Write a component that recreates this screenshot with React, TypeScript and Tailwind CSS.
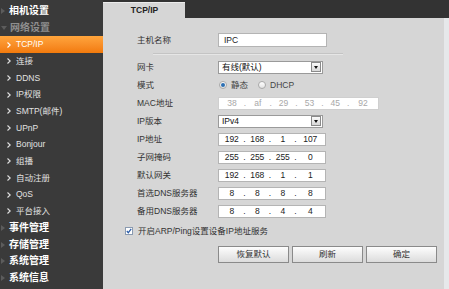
const FONT = { fontFamily: '"Liberation Sans", "Noto Sans CJK SC", sans-serif' };

type NavItem = { label: string; kind: 'top' | 'open' | 'sub'; active?: boolean };

const nav: NavItem[] = [
  { label: '相机设置', kind: 'top' },
  { label: '网络设置', kind: 'open' },
  { label: 'TCP/IP', kind: 'sub', active: true },
  { label: '连接', kind: 'sub' },
  { label: 'DDNS', kind: 'sub' },
  { label: 'IP权限', kind: 'sub' },
  { label: 'SMTP(邮件)', kind: 'sub' },
  { label: 'UPnP', kind: 'sub' },
  { label: 'Bonjour', kind: 'sub' },
  { label: '组播', kind: 'sub' },
  { label: '自动注册', kind: 'sub' },
  { label: 'QoS', kind: 'sub' },
  { label: '平台接入', kind: 'sub' },
  { label: '事件管理', kind: 'top' },
  { label: '存储管理', kind: 'top' },
  { label: '系统管理', kind: 'top' },
  { label: '系统信息', kind: 'top' },
];

function Sidebar() {
  return (
    <div className="w-[103px] shrink-0 bg-[#3a3a3a] pt-[3px]">
      {nav.map((item) => (
        <div
          key={item.label}
          className={`flex h-[16.66px] items-center ${
            item.active ? 'bg-gradient-to-b from-[#ffa53c] to-[#f27a0a]' : ''
          }`}
        >
          {item.kind === 'top' && (
            <>
              <span className="ml-[1px] h-0 w-0 border-y-[3px] border-l-[4px] border-y-transparent border-l-[#5c5c5c]" />
              <span className="ml-[4px] text-[10px] font-bold leading-none text-white">{item.label}</span>
            </>
          )}
          {item.kind === 'open' && (
            <>
              <span className="ml-[1px] mt-[1px] h-0 w-0 border-x-[3px] border-t-[4px] border-x-transparent border-t-[#5c5c5c]" />
              <span className="ml-[3px] text-[10px] font-bold leading-none text-[#8e8e8e]">{item.label}</span>
            </>
          )}
          {item.kind === 'sub' && (
            <>
              <svg width="4" height="6" viewBox="0 0 4 6" className="ml-[7px]">
                <path d="M0.5 0.5 L3.2 3 L0.5 5.5" fill="none" stroke={item.active ? '#fff' : '#e0e0e0'} strokeWidth="1.1" />
              </svg>
              <span className={`ml-[5px] text-[8.5px] leading-none ${item.active ? 'text-white' : 'text-[#e2e2e2]'}`}>
                {item.label}
              </span>
            </>
          )}
        </div>
      ))}
    </div>
  );
}

function Label({ children }: { children: React.ReactNode }) {
  return <div className="w-[81px] shrink-0 text-[8.5px] leading-none text-[#333]">{children}</div>;
}

function Row({ label, children }: { label: string; children: React.ReactNode }) {
  return (
    <div className="flex h-[18px] items-center">
      <Label>{label}</Label>
      {children}
    </div>
  );
}

function TextBox({ value, width }: { value: string; width: string }) {
  return (
    <div className={`flex h-[14px] items-center border border-[#b4b4b4] bg-white pl-[5px] text-[8.5px] leading-none text-[#222] ${width}`}>
      {value}
    </div>
  );
}

function Select({ value }: { value: string }) {
  return (
    <div className="flex h-[13px] w-[105px] items-center border border-[#9a9a9a] bg-white">
      <span className="flex-1 pl-[3px] text-[8.5px] leading-none text-[#111]">{value}</span>
      <span className="mr-[1px] flex h-[10px] w-[10px] items-center justify-center border border-[#8a8a8a] bg-gradient-to-b from-[#fafafa] to-[#d8d8d8]">
        <span className="h-0 w-0 border-x-[2.5px] border-t-[3px] border-x-transparent border-t-[#111]" />
      </span>
    </div>
  );
}

function Segments({ parts, width, muted }: { parts: string[]; width: string; muted?: boolean }) {
  return (
    <div
      className={`flex h-[13px] items-center border bg-white px-[2px] text-[8.5px] leading-none ${width} ${
        muted ? 'border-[#cfcfcf] text-[#a8a8a8]' : 'border-[#b4b4b4] text-[#222]'
      }`}
    >
      {parts.map((p, i) => (
        <div key={i} className="flex flex-1 items-center">
          <span className="flex-1 text-center">{p}</span>
          {i < parts.length - 1 && <span className="w-[4px] text-center">.</span>}
        </div>
      ))}
    </div>
  );
}

function Radio({ checked, label }: { checked?: boolean; label: string }) {
  return (
    <div className="flex items-center">
      <span className="flex h-[8px] w-[8px] items-center justify-center rounded-full border border-[#a9a9a9] bg-gradient-to-b from-white to-[#e4e4e4]">
        {checked && <span className="h-[4px] w-[4px] rounded-full bg-[#2c6fb3]" />}
      </span>
      <span className="ml-[4px] text-[8.5px] leading-none text-[#444]">{label}</span>
    </div>
  );
}

function Button({ label }: { label: string }) {
  return (
    <button className="flex h-[17px] w-[71px] items-center justify-center border border-[#8a8a8a] bg-gradient-to-b from-[#fdfdfd] to-[#dcdcdc] text-[8.5px] leading-none text-[#333]">
      {label}
    </button>
  );
}

export default function App() {
  return (
    <div className="flex h-[289px] w-[449px] overflow-hidden bg-[#3a3a3a]" style={FONT}>
      <Sidebar />
      <div className="flex flex-1 flex-col">
        <div className="flex h-[18px] items-end bg-[#333333]">
          <div className="flex h-[16px] w-[82px] items-center justify-center border-t border-[#ececec] bg-[#d6d6d6] pl-[1px] text-[8.5px] font-bold leading-none text-[#222]">
            TCP/IP
          </div>
        </div>
        <div className="flex flex-1">
          <div className="flex-1 bg-[#d6d6d6] pl-[34px] pt-[13px]">
            <Row label="主机名称">
              <TextBox value="IPC" width="w-[109px]" />
            </Row>
            <div className="ml-[16px] mt-[4px] h-px w-[190px] bg-[#c4c4c4] shadow-[0_1px_0_#e6e6e6]" />
            <div className="mt-[4px]">
              <Row label="网卡">
                <Select value="有线(默认)" />
              </Row>
              <Row label="模式">
                <div className="flex items-center gap-[10px] pl-[1px]">
                  <Radio checked label="静态" />
                  <Radio label="DHCP" />
                </div>
              </Row>
              <Row label="MAC地址">
                <Segments parts={['38', 'af', '29', '53', '45', '92']} width="w-[161px]" muted />
              </Row>
              <Row label="IP版本">
                <Select value="IPv4" />
              </Row>
              <Row label="IP地址">
                <Segments parts={['192', '168', '1', '107']} width="w-[108px]" />
              </Row>
              <Row label="子网掩码">
                <Segments parts={['255', '255', '255', '0']} width="w-[108px]" />
              </Row>
              <Row label="默认网关">
                <Segments parts={['192', '168', '1', '1']} width="w-[108px]" />
              </Row>
              <Row label="首选DNS服务器">
                <Segments parts={['8', '8', '8', '8']} width="w-[108px]" />
              </Row>
              <Row label="备用DNS服务器">
                <Segments parts={['8', '8', '4', '4']} width="w-[108px]" />
              </Row>
            </div>
            <div className="-ml-[12px] mt-[2px] flex h-[18px] items-center">
              <span className="flex h-[8px] w-[8px] items-center justify-center border border-[#8a9ab0] bg-white">
                <svg width="6" height="6" viewBox="0 0 6 6">
                  <path d="M0.8 3 L2.3 4.7 L5.2 0.8" fill="none" stroke="#2a5ca8" strokeWidth="1.2" />
                </svg>
              </span>
              <span className="ml-[5px] text-[8.5px] leading-none text-[#333]">开启ARP/Ping设置设备IP地址服务</span>
            </div>
            <div className="ml-[81px] mt-[6px] flex gap-[3px]">
              <Button label="恢复默认" />
              <Button label="刷新" />
              <Button label="确定" />
            </div>
          </div>
          <div className="w-[5px] bg-[#e6e8ea]" />
        </div>
      </div>
    </div>
  );
}
